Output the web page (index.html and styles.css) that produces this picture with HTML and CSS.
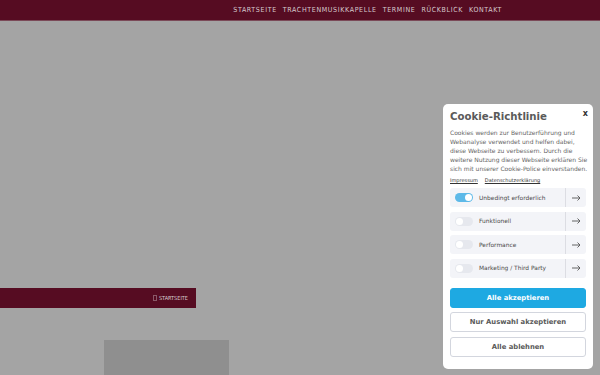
FILE: index.html
```html
<!DOCTYPE html>
<html lang="de">
<head>
	<meta charset="UTF-8">
	<meta name="viewport" content="width=device-width, initial-scale=1.0">
	<title>Trachtenmusikkapelle</title>
	<link rel="stylesheet" href="styles.css">
</head>
<body>
<header class="top">
	<nav class="menu">
		<a href="#">Startseite</a>
		<a href="#">Trachtenmusikkapelle</a>
		<a href="#">Termine</a>
		<a href="#">Rückblick</a>
		<a href="#">Kontakt</a>
	</nav>
</header>
<main class="page">
	<div class="hero"></div>
	<div class="crumb"><span class="home-ico"></span>Startseite</div>
	<div class="teaser"></div>
</main>

<div class="cookie">
	<button class="close">x</button>
	<h2>Cookie-Richtlinie</h2>
	<p class="intro">Cookies werden zur Benutzerführung und<br>Webanalyse verwendet und helfen dabei,<br>diese Webseite zu verbessern. Durch die<br>weitere Nutzung dieser Webseite erklären Sie<br>sich mit unserer Cookie-Police einverstanden.</p>
	<div class="links"><a href="#">Impressum</a><a href="#">Datenschutzerklärung</a></div>
	<div class="cat">
		<span class="tgl on"></span><span class="lbl">Unbedingt erforderlich</span>
		<span class="more"><svg width="9" height="6" viewBox="0 0 9 6"><path d="M0 3h8M5.5 0.5L8 3 5.5 5.5" fill="none" stroke="#555" stroke-width="0.9"/></svg></span>
	</div>
	<div class="cat">
		<span class="tgl"></span><span class="lbl">Funktionell</span>
		<span class="more"><svg width="9" height="6" viewBox="0 0 9 6"><path d="M0 3h8M5.5 0.5L8 3 5.5 5.5" fill="none" stroke="#555" stroke-width="0.9"/></svg></span>
	</div>
	<div class="cat">
		<span class="tgl"></span><span class="lbl">Performance</span>
		<span class="more"><svg width="9" height="6" viewBox="0 0 9 6"><path d="M0 3h8M5.5 0.5L8 3 5.5 5.5" fill="none" stroke="#555" stroke-width="0.9"/></svg></span>
	</div>
	<div class="cat">
		<span class="tgl"></span><span class="lbl">Marketing / Third Party</span>
		<span class="more"><svg width="9" height="6" viewBox="0 0 9 6"><path d="M0 3h8M5.5 0.5L8 3 5.5 5.5" fill="none" stroke="#555" stroke-width="0.9"/></svg></span>
	</div>
	<button class="btn primary">Alle akzeptieren</button>
	<button class="btn">Nur Auswahl akzeptieren</button>
	<button class="btn">Alle ablehnen</button>
</div>
</body>
</html>
```

FILE: styles.css
```css
html, body {
	margin: 0;
	height: 100%;
}
body {
	background: #a4a4a4;
	font-family: "DejaVu Sans", Verdana, sans-serif;
	overflow: hidden;
}
.top {
	background: #560c22;
	height: 20px;
	border-bottom: 1px solid #7b4a58;
	display: flex;
	justify-content: flex-end;
	align-items: center;
	padding-right: 98px;
}
.menu {
	display: flex;
	gap: 6px;
}
.menu a {
	color: #d6cbce;
	text-decoration: none;
	text-transform: uppercase;
	font-family: "DejaVu Sans Condensed", sans-serif;
	font-size: 7px;
	letter-spacing: 0.65px;
}
.page {
	display: flex;
	flex-direction: column;
}
.hero {
	height: 267px;
}
.crumb {
	background: #560c22;
	width: 188px;
	height: 20px;
	padding-right: 8px;
	display: flex;
	justify-content: flex-end;
	align-items: center;
	color: #d6cbce;
	font-family: "DejaVu Sans Condensed", sans-serif;
	font-size: 5.5px;
	text-transform: uppercase;
}
.home-ico {
	width: 2px;
	height: 4px;
	border: 1px solid #8a5868;
	margin-right: 2px;
}
.teaser {
	margin: 32px 0 0 104px;
	width: 125px;
	height: 40px;
	background: #8f8f8f;
}

/* cookie dialog */
.cookie {
	position: fixed;
	left: 443px;
	top: 104px;
	width: 136px;
	padding: 6px 7px 12px;
	background: #fff;
	border-radius: 5px;
	color: #555;
}
.close {
	position: absolute;
	right: 5px;
	top: 5px;
	border: 0;
	background: none;
	padding: 0;
	font-size: 8px;
	font-weight: bold;
	color: #333;
	font-family: inherit;
}
.cookie h2 {
	margin: 0 0 4px;
	font-size: 10.2px;
	line-height: 14px;
	color: #5a5a5a;
}
.intro {
	margin: 0;
	font-size: 6px;
	line-height: 9px;
	color: #666;
	white-space: nowrap;
}
.links {
	display: flex;
	gap: 7px;
	margin: 4px 0 5px;
	font-size: 5px;
}
.links a {
	color: #333;
}
.cat {
	display: flex;
	align-items: center;
	height: 19px;
	background: #f3f4f8;
	border-radius: 3px;
	margin-bottom: 4.5px;
	font-size: 5.9px;
	color: #4a4a4a;
}
.tgl {
	width: 18px;
	height: 9px;
	border-radius: 5px;
	background: #e6e8ee;
	margin: 0 6px 0 5px;
	position: relative;
}
.tgl::after {
	content: "";
	position: absolute;
	left: 1px;
	top: 1px;
	width: 7px;
	height: 7px;
	border-radius: 50%;
	background: #fff;
}
.tgl.on {
	background: #5db9e8;
}
.tgl.on::after {
	left: 10px;
}
.lbl {
	flex: 1;
}
.more {
	width: 20px;
	align-self: stretch;
	display: flex;
	align-items: center;
	justify-content: center;
	border-left: 1px solid #dcdde3;
}
.btn {
	display: block;
	width: 100%;
	height: 20px;
	margin-top: 4.5px;
	border: 1px solid #d3d6de;
	border-radius: 3px;
	background: #fff;
	color: #5a5a5a;
	font-family: inherit;
	font-size: 6.8px;
	font-weight: bold;
}
.btn.primary {
	margin-top: 10px;
	background: #1ea9e2;
	border-color: #1ea9e2;
	color: #fff;
}
```
